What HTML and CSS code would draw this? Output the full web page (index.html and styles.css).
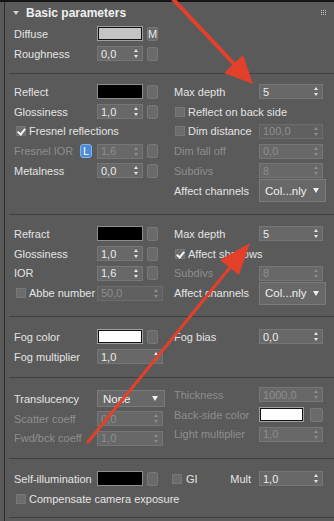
FILE: index.html
```html
<!DOCTYPE html>
<html lang="en">
<head>
  <meta charset="UTF-8" />
  <meta name="viewport" content="width=device-width, initial-scale=1.0" />
  <title>Basic parameters</title>
  <link rel="stylesheet" href="styles.css">
</head>
<body>
  <div class="window">
    <div class="panel">
      <div class="head">
        <span class="caret"></span>
        <span class="title">Basic parameters</span>
        <svg class="grip" width="6" height="6" viewBox="0 0 6 6">
          <rect x="0" y="0" width="1" height="1"/><rect x="2" y="0" width="1" height="1"/><rect x="4" y="0" width="1" height="1"/>
          <rect x="0" y="2" width="1" height="1"/><rect x="2" y="2" width="1" height="1"/><rect x="4" y="2" width="1" height="1"/>
          <rect x="0" y="4" width="1" height="1"/><rect x="2" y="4" width="1" height="1"/><rect x="4" y="4" width="1" height="1"/>
        </svg>
      </div>

      <!-- diffuse -->
      <div class="group g1">
        <div class="col">
          <div class="row"><span class="lbl">Diffuse</span><span class="swatch light"></span><span class="mapbtn">M</span></div>
          <div class="row"><span class="lbl">Roughness</span><span class="spin"><span class="val">0,0</span><span class="arr"></span></span><span class="mapbtn"></span></div>
        </div>
      </div>
      <div class="sep"></div>

      <!-- reflection -->
      <div class="group g2">
        <div class="col">
          <div class="row"><span class="lbl">Reflect</span><span class="swatch"></span><span class="mapbtn"></span></div>
          <div class="row"><span class="lbl">Glossiness</span><span class="spin"><span class="val">1,0</span><span class="arr"></span></span><span class="mapbtn"></span></div>
          <div class="row check-row"><span class="chk on"></span><span>Fresnel reflections</span></div>
          <div class="row off"><span class="lbl short">Fresnel IOR</span><span class="lock">L</span><span class="spin"><span class="val">1,6</span><span class="arr"></span></span><span class="mapbtn"></span></div>
          <div class="row"><span class="lbl">Metalness</span><span class="spin"><span class="val">0,0</span><span class="arr"></span></span><span class="mapbtn"></span></div>
        </div>
        <div class="col right">
          <div class="row"><span class="lbl">Max depth</span><span class="spin wide"><span class="val">5</span><span class="arr"></span></span></div>
          <div class="row check-row"><span class="chk"></span><span>Reflect on back side</span></div>
          <div class="row check-row"><span class="chk"></span><span class="lbl chk-lbl">Dim distance</span><span class="spin wide off"><span class="val">100,0</span><span class="arr"></span></span></div>
          <div class="row off"><span class="lbl">Dim fall off</span><span class="spin wide"><span class="val">0,0</span><span class="arr"></span></span></div>
          <div class="row off"><span class="lbl">Subdivs</span><span class="spin wide"><span class="val">8</span><span class="arr"></span></span></div>
          <div class="row"><span class="lbl">Affect channels</span><span class="drop">Col...nly</span></div>
        </div>
      </div>
      <div class="sep"></div>

      <!-- refraction -->
      <div class="group g3">
        <div class="col">
          <div class="row"><span class="lbl">Refract</span><span class="swatch"></span><span class="mapbtn"></span></div>
          <div class="row"><span class="lbl">Glossiness</span><span class="spin"><span class="val">1,0</span><span class="arr"></span></span><span class="mapbtn"></span></div>
          <div class="row"><span class="lbl">IOR</span><span class="spin"><span class="val">1,6</span><span class="arr"></span></span><span class="mapbtn"></span></div>
          <div class="row check-row"><span class="chk"></span><span class="lbl chk-lbl">Abbe number</span><span class="spin long off"><span class="val">50,0</span><span class="arr"></span></span></div>
        </div>
        <div class="col right">
          <div class="row"><span class="lbl">Max depth</span><span class="spin wide"><span class="val">5</span><span class="arr"></span></span></div>
          <div class="row check-row"><span class="chk on"></span><span>Affect shadows</span></div>
          <div class="row off"><span class="lbl">Subdivs</span><span class="spin wide"><span class="val">8</span><span class="arr"></span></span></div>
          <div class="row"><span class="lbl">Affect channels</span><span class="drop">Col...nly</span></div>
        </div>
      </div>
      <div class="sep"></div>

      <!-- fog -->
      <div class="group g4">
        <div class="col">
          <div class="row"><span class="lbl">Fog color</span><span class="swatch white"></span><span class="mapbtn"></span></div>
          <div class="row"><span class="lbl">Fog multiplier</span><span class="spin long"><span class="val">1,0</span><span class="arr"></span></span></div>
        </div>
        <div class="col right">
          <div class="row"><span class="lbl">Fog bias</span><span class="spin wide"><span class="val">0,0</span><span class="arr"></span></span></div>
        </div>
      </div>
      <div class="sep"></div>

      <!-- translucency -->
      <div class="group g5">
        <div class="col lower">
          <div class="row"><span class="lbl">Translucency</span><span class="drop small">None</span></div>
          <div class="row off"><span class="lbl">Scatter coeff</span><span class="spin long"><span class="val">0,0</span><span class="arr"></span></span></div>
          <div class="row off"><span class="lbl">Fwd/bck coeff</span><span class="spin long"><span class="val">1,0</span><span class="arr"></span></span></div>
        </div>
        <div class="col right">
          <div class="row off"><span class="lbl">Thickness</span><span class="spin wide"><span class="val">1000,0</span><span class="arr"></span></span></div>
          <div class="row off"><span class="lbl">Back-side color</span><span class="swatch white narrow"></span><span class="mapbtn far"></span></div>
          <div class="row off"><span class="lbl">Light multiplier</span><span class="spin wide"><span class="val">1,0</span><span class="arr"></span></span></div>
        </div>
      </div>
      <div class="sep"></div>

      <!-- self-illumination -->
      <div class="group g6">
        <div class="col">
          <div class="row"><span class="lbl">Self-illumination</span><span class="swatch"></span><span class="mapbtn"></span></div>
          <div class="row check-row"><span class="chk"></span><span class="nowrap">Compensate camera exposure</span></div>
        </div>
        <div class="col right">
          <div class="row gi-row"><span class="chk"></span><span class="gi">GI</span><span class="mult">Mult</span><span class="spin wide"><span class="val">1,0</span><span class="arr"></span></span></div>
        </div>
      </div>
      <div class="sep"></div>
    </div>
  </div>

  <svg class="arrows" width="334" height="521" viewBox="0 0 334 521">
    <line x1="171" y1="-3" x2="236" y2="66" />
    <polygon points="253,84 224,73 243,55" />
    <line class="thin" x1="88" y1="442" x2="232" y2="265" />
    <polygon points="250,243 239,275 220,260" />
  </svg>
</body>
</html>
```

FILE: styles.css
```css
* { box-sizing: border-box; }
body {
  margin: 0;
  background: #5a5a5a;
  font-family: "Liberation Sans", Arial, sans-serif;
  font-size: 11px;
  color: #e4e4e4;
  overflow: hidden;
}
.window { border-top: 2px solid #141414; height: 521px; }
.panel {
  margin-left: 4px;
  border-left: 1px solid #2e2e2e;
  height: 100%;
}

.head { height: 22px; display: flex; align-items: center; padding-left: 8px; }
.caret {
  width: 0; height: 0;
  border-left: 3px solid transparent;
  border-right: 3px solid transparent;
  border-top: 4px solid #d0d0d0;
  margin-right: 7px;
}
.title { font-size: 12px; font-weight: bold; color: #f0f0f0; }
.grip { margin-left: auto; margin-right: 7px; fill: #c8c8c8; }

.sep { height: 1px; background: #3f3f3f; margin-left: 4px; }

.group { display: grid; grid-template-columns: 160px 1fr; padding-left: 9px; }
.g1 { padding-top: 0; padding-bottom: 9.5px; }
.g2 { padding-top: 8px; padding-bottom: 13.5px; }
.g3 { padding-top: 9px; padding-bottom: 13px; }
.g4 { padding-top: 10px; padding-bottom: 10.5px; }
.g5 { padding-top: 7px; padding-bottom: 9.75px; }
.g6 { padding-top: 10px; padding-bottom: 8.5px; }
.col { display: flex; flex-direction: column; }
.col.lower { padding-top: 4px; }

.row { display: flex; align-items: center; height: 19.75px; white-space: nowrap; }
.lbl { width: 83px; flex: none; }
.right .lbl { width: 85px; }
.lbl.short { width: 66px; }
.off, .off .val { color: #8e8e8e; }

.check-row { padding-left: 2px; }
.right .check-row { padding-left: 1px; }
.chk {
  width: 10px; height: 10px; flex: none;
  background: #6c6c6c;
  border: 1px solid #777;
  margin-right: 3px;
  position: relative;
}
.chk.on::after {
  content: "";
  position: absolute;
  left: 2px; top: 0px;
  width: 3px; height: 6px;
  border-right: 2px solid #f4f4f4;
  border-bottom: 2px solid #f4f4f4;
  transform: rotate(40deg);
}
.lbl.chk-lbl { width: 68px; }
.right .lbl.chk-lbl { width: 71px; }

.swatch {
  width: 46px; height: 15px; flex: none;
  background: #000;
  border: 1px solid #8d8d8d;
}
.swatch.light { background: #c4c4c4; box-shadow: inset 0 0 0 1px #111; border-color: #a0a0a0; }
.swatch.white { background: #fff; box-shadow: inset 0 0 0 1px #111; border-color: #a0a0a0; }
.swatch.narrow { width: 45px; }

.mapbtn {
  width: 11px; height: 14px; flex: none;
  margin-left: 4px;
  background: #6a6a6a;
  border: 1px solid #787878;
  border-radius: 2px;
  color: #e8e8e8;
  font-size: 11px;
  line-height: 12px;
  text-align: center;
}
.mapbtn.far { margin-left: 6px; width: 13px; }

.lock {
  width: 12px; height: 14px; flex: none;
  margin-right: 5px;
  background: #4f8ad6;
  border: 1px solid #82b2ef;
  border-radius: 3px;
  color: #fff;
  line-height: 12px;
  text-align: center;
}

.spin {
  width: 46px; height: 15px; flex: none;
  display: flex; align-items: center;
  padding: 0 3px;
  background: #686868;
  border: 1px solid #767676;
  color: #ececec;
}
.spin.wide { width: 64px; }
.spin.long { width: 66px; }
.spin.off { background: #606060; border-color: #6c6c6c; }
.spin .val { flex: 1; }
.arr { width: 5px; height: 9px; position: relative; }
.arr::before, .arr::after {
  content: "";
  position: absolute;
  left: 0;
  border-left: 2.5px solid transparent;
  border-right: 2.5px solid transparent;
}
.arr::before { top: 0; border-bottom: 3px solid #e6e6e6; }
.arr::after { bottom: 0; border-top: 3px solid #e6e6e6; }
.off .arr::before, .spin.off .arr::before { border-bottom-color: #8e8e8e; }
.off .arr::after, .spin.off .arr::after { border-top-color: #8e8e8e; }

.drop {
  width: 67px; height: 23px; flex: none;
  display: flex; align-items: center;
  padding: 0 6px 0 5px;
  background: #686868;
  border: 1px solid #7a7a7a;
  font-size: 11.5px;
  color: #f0f0f0;
}
.drop::after {
  content: "";
  margin-left: auto;
  border-left: 3.5px solid transparent;
  border-right: 3.5px solid transparent;
  border-top: 5px solid #f0f0f0;
}
.drop.small { width: 68px; height: 17px; }

.gi-row { margin-left: -2px; }
.gi { margin-left: 1px; }
.mult { margin-left: auto; margin-right: 8px; }
.gi-row .spin { margin-right: 3px; }
.right .gi-row { padding-right: 0; }
.g6 .right { padding-right: 8px; }

.arrows {
  position: absolute;
  left: 0; top: 0;
  pointer-events: none;
}
.arrows line { stroke: #e3402c; stroke-width: 4; stroke-linecap: round; }
.arrows line.thin { stroke-width: 3; }
.arrows polygon { fill: #e3402c; }
```
